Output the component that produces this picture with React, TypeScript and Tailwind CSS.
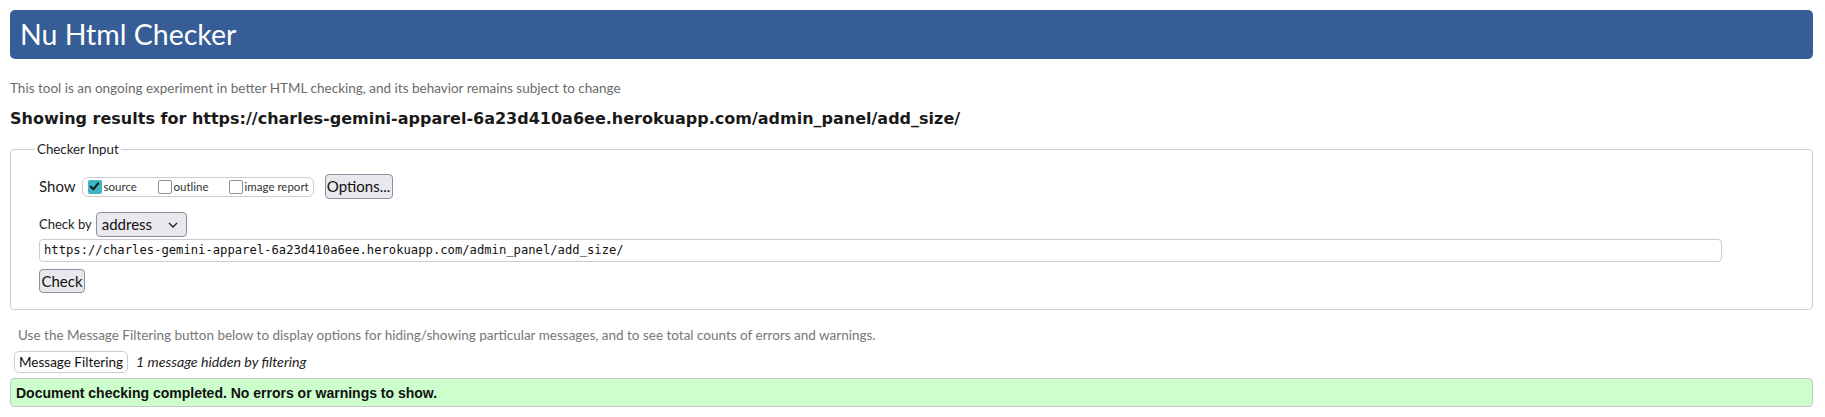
import React from "react";

const URL = "https://charles-gemini-apparel-6a23d410a6ee.herokuapp.com/admin_panel/add_size/";

function Box({ checked }: { checked?: boolean }) {
  if (checked) {
    return (
      <span className="inline-flex h-[14px] w-[14px] shrink-0 items-center justify-center rounded-[2px] bg-[#3fb3c4]">
        <svg width="11" height="11" viewBox="0 0 12 12">
          <path d="M2 6.2 L4.8 9 L10 2.6" fill="none" stroke="#1b1b1b" strokeWidth="2.2" strokeLinecap="round" strokeLinejoin="round" />
        </svg>
      </span>
    );
  }
  return <span className="inline-block h-[14px] w-[14px] shrink-0 rounded-[2px] border-[1.5px] border-[#8f8f9d] bg-white" />;
}

export default function App() {
  return (
    <div className="h-[417px] w-[1825px] overflow-hidden bg-white pl-[10px] pr-[12px] pt-[10px] font-['Lato','Noto_Sans',sans-serif] text-[#222]">
      <header className="flex h-[49px] items-center rounded-[5px] bg-[#365d95] pl-[10px]">
        <h1 className="text-[28.5px] leading-none text-white">Nu Html Checker</h1>
      </header>

      <p className="mt-[19px] text-[13.5px] leading-[20px] text-[#6b6b6b]">
        This tool is an ongoing experiment in better HTML checking, and its behavior remains subject to change
      </p>

      <h2 className="mt-[10px] font-['DejaVu_Sans',sans-serif] text-[16px] font-bold leading-[22px] text-[#1a1a1a]">
        Showing results for {URL}
      </h2>

      <fieldset className="mt-[9px] rounded-[4px] border border-[#cccccc] pb-[16px] pl-[24px] pr-[90px]">
        <legend className="px-[2px] text-[13.3px] leading-[20px] text-[#222]">Checker Input</legend>
        <div className="pl-[4px]">
          <div className="mt-[15px] flex h-[25px] items-center">
            <span className="text-[15px] text-[#222]">Show</span>
            <div className="ml-[6px] flex h-[20px] w-[232px] items-center whitespace-nowrap rounded-[6px] border border-[#cccccc] pl-[5px] text-[11.5px] text-[#333]">
              <label className="flex w-[70px] items-center">
                <Box checked />
                <span className="ml-[2px]">source</span>
              </label>
              <label className="flex w-[71px] items-center">
                <Box />
                <span className="ml-[2px]">outline</span>
              </label>
              <label className="flex items-center">
                <Box />
                <span className="ml-[2px]">image report</span>
              </label>
            </div>
            <button className="ml-[11px] flex h-[25px] w-[68px] items-center justify-center rounded-[4px] border border-[#8f8f9d] bg-[#e9e9ed] text-[15px] text-[#111]">
              Options...
            </button>
          </div>

          <div className="mt-[13px] flex h-[25px] items-center">
            <span className="text-[13px] text-[#222]">Check by</span>
            <div className="ml-[4px] flex h-[25px] w-[91px] items-center justify-between rounded-[4px] border border-[#8f8f9d] bg-[#e9e9ed] pl-[5px] pr-[8px] text-[15px] text-[#111]">
              <span>address</span>
              <svg width="10" height="6" viewBox="0 0 10 6">
                <path d="M1 1 L5 5 L9 1" fill="none" stroke="#222" strokeWidth="1.4" />
              </svg>
            </div>
          </div>

          <div className="mt-[2px] flex h-[23px] items-center rounded-[4px] border border-[#cccccc] pl-[4px] font-['DejaVu_Sans_Mono',monospace] text-[12.2px] text-[#111]">
            {URL}
          </div>

          <button className="mt-[7px] flex h-[24px] w-[46px] items-center justify-center rounded-[4px] border border-[#8f8f9d] bg-[#e9e9ed] text-[15px] text-[#111]">
            Check
          </button>
        </div>
      </fieldset>

      <p className="mt-[15px] pl-[8px] text-[13.5px] leading-[20px] text-[#777]">
        Use the Message Filtering button below to display options for hiding/showing particular messages, and to see total counts of errors and warnings.
      </p>

      <div className="mt-[6px] flex items-center">
        <button className="ml-[4px] flex h-[22px] items-center rounded-[5px] border border-[#cccccc] bg-white px-[4px] text-[13.5px] text-[#111]">
          Message Filtering
        </button>
        <span className="ml-[8px] text-[14.2px] italic text-[#222]">1 message hidden by filtering</span>
      </div>

      <div className="mt-[5px] flex h-[29px] items-center rounded-[4px] border border-[#c6c6c6] bg-[#ccffcc] pl-[5px] font-['Liberation_Sans',Arial,sans-serif] text-[14px] font-bold leading-[20px] text-[#111]">
        Document checking completed. No errors or warnings to show.
      </div>
    </div>
  );
}
